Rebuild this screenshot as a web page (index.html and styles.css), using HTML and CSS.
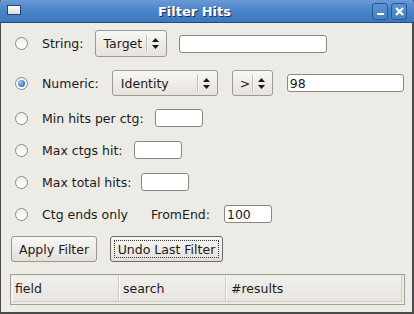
FILE: index.html
```html
<!DOCTYPE html>
<html lang="en">
<head>
  <meta charset="UTF-8">
  <title>Filter Hits</title>
  <link rel="stylesheet" href="styles.css">
</head>
<body>
  <div class="window">
    <div class="titlebar">
      <div class="win-icon"></div>
      <div class="title">Filter Hits</div>
      <div class="win-buttons">
        <div class="win-btn">
          <svg width="9" height="9" viewBox="0 0 9 9"><rect x="1" y="6" width="7" height="2" fill="#fff"/></svg>
        </div>
        <div class="win-btn">
          <svg width="9" height="9" viewBox="0 0 9 9"><path d="M1 1L8 8M8 1L1 8" stroke="#fff" stroke-width="2.2"/></svg>
        </div>
      </div>
    </div>

    <div class="content">
      <div class="row row-string">
        <span class="radio"></span>
        <span class="label lbl-string">String:</span>
        <div class="select sel-target">
          <span class="sel-text">Target</span>
          <span class="sel-sep"></span>
          <svg class="sel-arrows" width="7" height="11" viewBox="0 0 7 11"><path d="M3.5 0L7 4H0Z M3.5 11L7 7H0Z" fill="#1a1a1a"/></svg>
        </div>
        <input class="entry entry-string" type="text">
      </div>

      <div class="row row-numeric">
        <span class="radio checked"></span>
        <span class="label lbl-numeric">Numeric:</span>
        <div class="select sel-identity">
          <span class="sel-text">Identity</span>
          <span class="sel-sep"></span>
          <svg class="sel-arrows" width="7" height="11" viewBox="0 0 7 11"><path d="M3.5 0L7 4H0Z M3.5 11L7 7H0Z" fill="#1a1a1a"/></svg>
        </div>
        <div class="select sel-op">
          <span class="sel-text">&gt;</span>
          <span class="sel-sep"></span>
          <svg class="sel-arrows" width="7" height="11" viewBox="0 0 7 11"><path d="M3.5 0L7 4H0Z M3.5 11L7 7H0Z" fill="#1a1a1a"/></svg>
        </div>
        <input class="entry entry-num" type="text" value="98">
      </div>

      <div class="row row-small">
        <span class="radio"></span>
        <span class="label">Min hits per ctg:</span>
        <input class="entry entry-small" type="text">
      </div>

      <div class="row row-small">
        <span class="radio"></span>
        <span class="label">Max ctgs hit:</span>
        <input class="entry entry-small" type="text">
      </div>

      <div class="row row-small">
        <span class="radio"></span>
        <span class="label lbl-total">Max total hits:</span>
        <input class="entry entry-small" type="text">
      </div>

      <div class="row row-small">
        <span class="radio"></span>
        <span class="label lbl-ends">Ctg ends only</span>
        <span class="label lbl-from">FromEnd:</span>
        <input class="entry entry-small" type="text" value="100">
      </div>

      <div class="row row-buttons">
        <button class="btn btn-apply">Apply Filter</button>
        <button class="btn btn-undo"><span class="focus">Undo Last Filter</span></button>
      </div>

      <div class="history">
        <div class="history-head">
          <div class="col col-field">field</div>
          <div class="col col-search">search</div>
          <div class="col col-results">#results</div>
        </div>
      </div>
    </div>
  </div>
</body>
</html>
```

FILE: styles.css
```css
* {
  box-sizing: border-box;
  font-family: 'DejaVu Sans', sans-serif;
}

body {
  margin: 0;
  background: #edebe6;
}

.window {
  width: 414px;
  height: 314px;
  background: #edebe6;
  border-left: 1px solid #4a4a4a;
  border-right: 2px solid #4a4a4a;
  border-bottom: 2px solid #4a4a4a;
  display: flex;
  flex-direction: column;
  color: #1a1a1a;
  font-size: 12.5px;
}

/* title bar */
.titlebar {
  height: 23px;
  margin: 0 -2px 0 -1px;
  background: linear-gradient(#6a9ad6, #4a85c9 45%, #3d78be);
  border-bottom: 1px solid #24497a;
  border-radius: 3px 3px 0 0;
  display: flex;
  align-items: center;
  padding: 0 7px 0 7px;
}

.win-icon {
  width: 14px;
  height: 10px;
  background: linear-gradient(#ffffff, #d8d8d8);
  border: 1px solid #26466f;
  margin-bottom: 2px;
}

.title {
  flex: 1;
  text-align: center;
  color: white;
  font-weight: bold;
  font-size: 13px;
  text-shadow: 1px 1px 0 #1e3352;
  padding-right: 4px;
}

.win-buttons {
  display: flex;
  gap: 3px;
}

.win-btn {
  width: 16px;
  height: 17px;
  border: 1px solid #2a558e;
  border-radius: 3px;
  background: linear-gradient(#5b92d2, #4581c6);
  display: flex;
  align-items: center;
  justify-content: center;
}

/* content */
.content {
  padding: 7px 0 0 14px;
  display: flex;
  flex-direction: column;
}

.row {
  display: flex;
  align-items: center;
}

.row-string { height: 27px; }
.row-numeric { height: 26px; margin-top: 13px; }
.row-small { height: 24px; margin-top: 10px; }
.row-small + .row-small { margin-top: 8px; }
.row-buttons { height: 26px; margin-top: 10px; margin-left: -4px; }

.radio {
  width: 13px;
  height: 13px;
  border: 1px solid #8d887f;
  border-radius: 50%;
  background: linear-gradient(#f0eeea, #ffffff);
  margin-right: 14px;
  flex: none;
  display: flex;
  align-items: center;
  justify-content: center;
}

.radio.checked::after {
  content: "";
  width: 7px;
  height: 7px;
  border-radius: 50%;
  background: radial-gradient(circle at 35% 35%, #a8cdf5, #3f86d8 55%, #2a64b0);
}

.label {
  margin-right: 11px;
  white-space: nowrap;
}

.lbl-string { margin-right: 11px; }
.lbl-numeric { margin-right: 13px; }
.lbl-total { margin-right: 10px; }
.lbl-ends { margin-right: 23px; }
.lbl-from { margin-right: 14px; }

.select {
  height: 100%;
  border: 1px solid #9e9a91;
  border-radius: 3px;
  background: linear-gradient(#f8f7f5, #e6e2dc);
  display: flex;
  align-items: center;
  padding-left: 8px;
  flex: none;
}

.sel-text {
  flex: 1;
}

.sel-sep {
  width: 2px;
  height: 17px;
  border-left: 1px solid #c3bfb8;
  border-right: 1px solid #fbfaf9;
  margin-right: 4px;
}

.sel-arrows {
  margin-right: 7px;
}

.sel-target { width: 72px; margin-right: 12px; }
.sel-identity { width: 106px; margin-right: 14px; }
.sel-op { width: 41px; margin-right: 14px; padding-left: 7px; }

.entry {
  height: 18px;
  border: 1px solid #8d887f;
  border-radius: 3px;
  background: white;
  font-size: 12.5px;
  padding: 0 2px;
  color: #1a1a1a;
  outline: none;
}

.entry-string { width: 148px; }
.entry-num { width: 117px; }
.entry-small { width: 48px; }

/* buttons */
.btn {
  height: 26px;
  border: 1px solid #9a968d;
  border-radius: 3px;
  background: linear-gradient(#f8f7f5, #e4e0da);
  font-size: 12.5px;
  color: #1a1a1a;
  padding: 0;
  display: flex;
  align-items: center;
  justify-content: center;
}

.btn-apply { width: 86px; margin-right: 13px; }

.btn-undo {
  width: 113px;
  border-color: #6e6a63;
  padding: 3px;
}

.btn-undo .focus {
  width: 100%;
  height: 100%;
  border: 1px dotted #333;
  display: flex;
  align-items: center;
  justify-content: center;
}

/* results list */
.history {
  margin-top: 12px;
  margin-left: -5px;
  width: 395px;
  height: 31px;
  border: 1px solid #a39f97;
  padding: 1px 2px 0 1px;
}

.history-head {
  height: 26px;
  display: flex;
  background: linear-gradient(#f1efeb, #e8e5e0);
  border-bottom: 1px solid #cfcac3;
}

.col {
  display: flex;
  align-items: center;
  padding-left: 3px;
  border-right: 1px solid #cfcac3;
  box-shadow: inset 1px 0 0 #fbfaf8;
}

.col-field { width: 107px; }
.col-search { width: 107px; padding-left: 4px; }
.col-results { flex: 1; padding-left: 5px; }
```
